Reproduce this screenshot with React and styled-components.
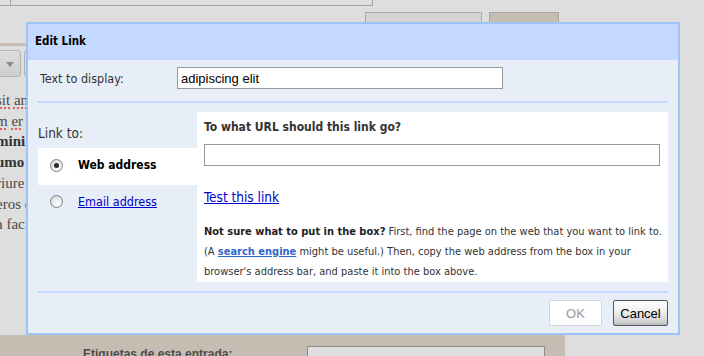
import React from 'react'
import styled, { createGlobalStyle } from 'styled-components'

const GlobalStyle = createGlobalStyle`
    html, body {
        margin: 0;
        padding: 0;
        background: #dedede;
    }
    * {
        box-sizing: border-box;
    }
`

function App() {
    return (
        <Page>
            <GlobalStyle />
            <TopStrip>
                <TopBox width={11} />
                <TopBox width={362} />
            </TopStrip>
            <TopButtons>
                <PageButton width={117} />
                <PageButton width={70} tan />
            </TopButtons>
            <Editor>
                <Toolbar>
                    <ToolButton first>
                        <DropArrow />
                    </ToolButton>
                    <ToolButton />
                </Toolbar>
                <Body>
                    <Line><Misspelled>sit</Misspelled> <Misspelled>an</Misspelled>et lorem</Line>
                    <Line><Misspelled>m</Misspelled> <Misspelled>er</Misspelled> ut volutpat</Line>
                    <Line bold>minim veniam</Line>
                    <Line bold>umo consequat</Line>
                    <Line>riure dolor in</Line>
                    <Line>eros et accumsan</Line>
                    <Line>a facilisi nam</Line>
                </Body>
                <Labels>
                    <LabelsText>Etiquetas de esta entrada:</LabelsText>
                    <LabelsInput />
                </Labels>
            </Editor>

            <Dialog>
                <DialogHeader>Edit Link</DialogHeader>
                <DialogBody>
                    <TextRow>
                        <FieldLabel>Text to display:</FieldLabel>
                        <TextInput defaultValue="adipiscing elit" />
                    </TextRow>
                    <Separator gap={12} />
                    <LinkSection>
                        <LinkTypes>
                            <LinkToLabel>Link to:</LinkToLabel>
                            <LinkType active>
                                <Radio checked />
                                <strong>Web address</strong>
                            </LinkType>
                            <LinkType>
                                <Radio />
                                <Anchor size={12.5}>Email address</Anchor>
                            </LinkType>
                        </LinkTypes>
                        <LinkPanel>
                            <PanelTitle>To what URL should this link go?</PanelTitle>
                            <UrlInput />
                            <TestLink><Anchor size={13.5}>Test this link</Anchor></TestLink>
                            <Help>
                                <strong>Not sure what to put in the box?</strong> First, find the page on the web that you want to link to.
                                (A <SearchLink>search engine</SearchLink> might be useful.) Then, copy the web address from the box in your
                                browser's address bar, and paste it into the box above.
                            </Help>
                        </LinkPanel>
                    </LinkSection>
                    <Separator gap={9} />
                    <Footer>
                        <OkButton disabled>OK</OkButton>
                        <CancelButton>Cancel</CancelButton>
                    </Footer>
                </DialogBody>
            </Dialog>
        </Page>
    )
}

export default App

const Page = styled.div`
    position: relative;
    width: 704px;
    height: 356px;
    overflow: hidden;
    background: #dedede;
`
const TopStrip = styled.div`
    display: flex;
    height: 6px;
`
const TopBox = styled.div`
    width: ${p => p.width}px;
    border-right: 1px solid #a4a4a4;
    border-bottom: 1px solid #a4a4a4;
`
const TopButtons = styled.div`
    display: flex;
    gap: 7px;
    height: 22px;
    margin-top: 6px;
    padding-left: 365px;
`
const PageButton = styled.div`
    width: ${p => p.width}px;
    background: ${p => p.tan ? '#c5bdb1' : '#d5d5d5'};
    border: 1px solid #a9a9a9;
`
const Editor = styled.div`
    width: 565px;
    margin-top: 9px;
    border-top: 3px solid #c5bdb1;
`
const Toolbar = styled.div`
    display: flex;
    gap: 3px;
    height: 34px;
    padding-top: 4px;
    margin-left: -10px;
`
const ToolButton = styled.div`
    position: relative;
    width: ${p => p.first ? 31 : 40}px;
    height: 27px;
    border: 1px solid #b3b3b3;
    border-radius: 3px;
    background: linear-gradient(#dcdcdc, #cfcfcf);
`
const DropArrow = styled.span`
    position: absolute;
    left: 15px;
    top: 11px;
    border-left: 4px solid transparent;
    border-right: 4px solid transparent;
    border-top: 5px solid #8a8a8a;
`
const Body = styled.div`
    height: 255px;
    padding-top: 10px;
    margin-left: -4px;
    font-family: "Liberation Serif", serif;
    font-size: 15px;
    line-height: 20.7px;
    color: #4a4a4a;
    white-space: nowrap;
`
const Line = styled.div`
    font-weight: ${p => p.bold ? 'bold' : 'normal'};
    color: ${p => p.bold ? '#333' : '#4a4a4a'};
`
const Misspelled = styled.span`
    text-decoration: underline dotted #d33;
    text-underline-offset: 3px;
`
const Labels = styled.div`
    display: flex;
    align-items: flex-start;
    height: 40px;
    padding: 11px 0 0 83px;
    background: #c5bdb1;
`
const LabelsText = styled.div`
    width: 224px;
    margin-top: 1px;
    font-family: "Liberation Sans", Arial, sans-serif;
    font-weight: bold;
    font-size: 12px;
    color: #4d4d4d;
`
const LabelsInput = styled.div`
    width: 238px;
    height: 22px;
    border: 1px solid #8d8d8d;
    background: #dedede;
`

const Dialog = styled.div`
    position: absolute;
    left: 26px;
    top: 22px;
    width: 654px;
    height: 313px;
    border: 2px solid #9dc3fb;
    background: #e8eef7;
    font-family: "DejaVu Sans Condensed", "DejaVu Sans", Verdana, sans-serif;
    font-stretch: condensed;
    color: #222;
`
const DialogHeader = styled.div`
    display: flex;
    align-items: center;
    height: 36px;
    padding: 0 0 3px 7px;
    background: #c3d9ff;
    font-weight: bold;
    font-size: 11.5px;
    color: #000;
`
const DialogBody = styled.div`
    padding: 7px 10px 0 10px;
`
const TextRow = styled.div`
    display: flex;
    align-items: center;
`
const FieldLabel = styled.div`
    width: 139px;
    padding-left: 2px;
    font-size: 12.5px;
    color: #333;
`
const TextInput = styled.input`
    width: 326px;
    height: 22px;
    padding: 0 3px;
    border: 1px solid #999;
    background: #fff;
    font-family: "Liberation Sans", Arial, sans-serif;
    font-size: 13px;
    color: #000;
    outline: none;
`
const Separator = styled.div`
    height: 2px;
    margin-top: ${p => p.gap}px;
    background: #c3d9ff;
`
const LinkSection = styled.div`
    display: flex;
    height: 170px;
    margin-top: 9px;
`
const LinkTypes = styled.div`
    width: 159px;
    padding-top: 14px;
`
const LinkToLabel = styled.div`
    height: 22px;
    font-size: 13.5px;
    line-height: 15px;
    color: #333;
`
const LinkType = styled.div`
    display: flex;
    align-items: center;
    gap: 15px;
    height: ${p => p.active ? 37 : 32}px;
    padding: ${p => p.active ? '0 0 3px 12px' : '0 0 0 12px'};
    background: ${p => p.active ? '#fff' : 'transparent'};
    font-size: 12px;
    color: #000;
`
const Radio = styled.span`
    position: relative;
    flex: none;
    width: 13px;
    height: 13px;
    border: 1px solid #7f7f7f;
    border-radius: 50%;
    background: radial-gradient(circle at 65% 70%, #ffffff 0%, #f0f0f0 35%, #cfcfcf 100%);
    ${p => p.checked && `
        &::after {
            content: '';
            position: absolute;
            left: 3px;
            top: 3px;
            width: 5px;
            height: 5px;
            border-radius: 50%;
            background: #2b2b2b;
        }
    `}
`
const Anchor = styled.span`
    font-size: ${p => p.size}px;
    color: #0000cc;
    text-decoration: underline;
`
const LinkPanel = styled.div`
    flex: 1;
    padding: 8px 2px 0 7px;
    background: #fff;
`
const PanelTitle = styled.div`
    font-weight: bold;
    font-size: 12px;
    line-height: 14px;
    color: #333;
`
const UrlInput = styled.input`
    display: block;
    width: 456px;
    height: 22px;
    margin-top: 10px;
    border: 1px solid #999;
    background: #fff;
    outline: none;
`
const TestLink = styled.div`
    margin-top: 23px;
    line-height: 15px;
`
const Help = styled.div`
    margin-top: 17px;
    font-size: 11px;
    line-height: 20px;
    color: #333;

    strong {
        color: #222;
    }
`
const SearchLink = styled.span`
    font-weight: bold;
    color: #3366cc;
    text-decoration: underline;
`
const Footer = styled.div`
    display: flex;
    justify-content: flex-end;
    gap: 11px;
    margin-top: 7px;
`
const BaseButton = styled.button`
    height: 26px;
    padding: 0;
    border-radius: 2px;
    font-family: "Liberation Sans", Arial, sans-serif;
    font-size: 13px;
`
const OkButton = styled(BaseButton)`
    width: 53px;
    border: 1px solid #d4d4d4;
    background: #fff;
    color: #9a9a9a;
`
const CancelButton = styled(BaseButton)`
    width: 55px;
    border: 1px solid #555;
    background: linear-gradient(#ffffff, #eeeeee 45%, #d2d2d2 85%, #b8b8b8);
    color: #000;
`
